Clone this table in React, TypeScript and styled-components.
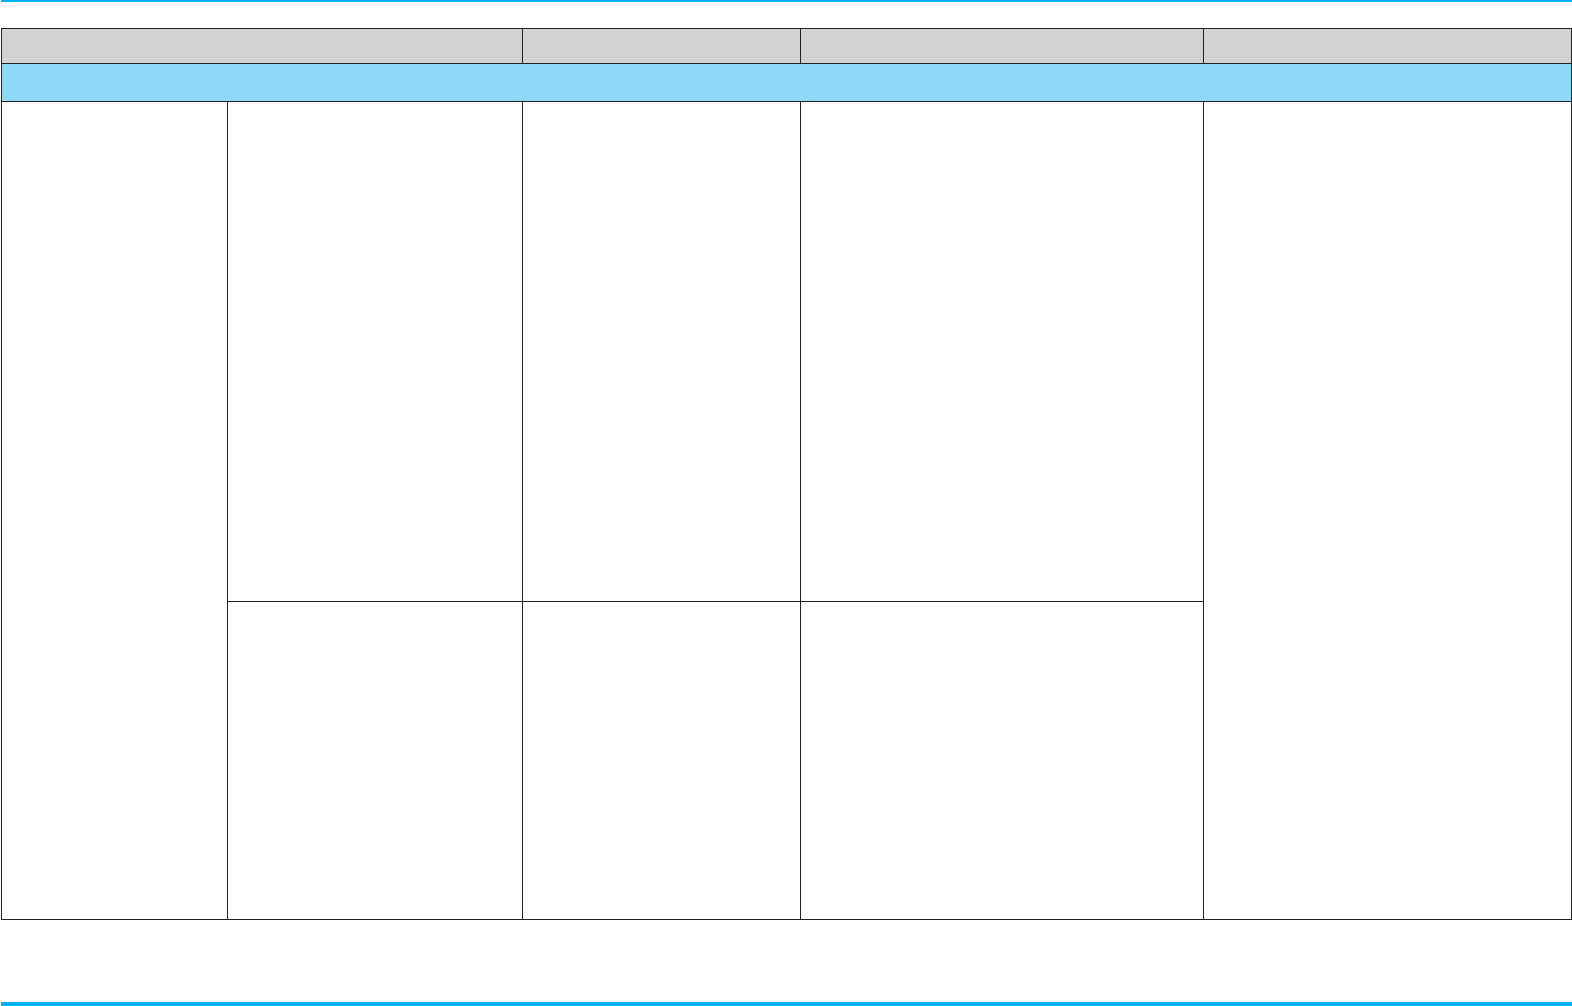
import * as React from 'react';
import styled, { createGlobalStyle } from 'styled-components';

const GlobalStyle = createGlobalStyle`
  html, body {
    margin: 0;
    padding: 0;
    background: #ffffff;
    font-family: 'Liberation Sans', Arial, sans-serif;
  }
`;

const Page = styled.div`
  display: flex;
  flex-direction: column;
  width: 1571px;
  height: 1006px;
  margin-left: 1px;
`;

const Rule = styled.div<{ $thick: number }>`
  height: ${(p) => p.$thick}px;
  background: #00b0f0;
  flex: none;
`;

const Spacer = styled.div<{ $h?: number }>`
  flex: ${(p) => (p.$h ? 'none' : '1')};
  height: ${(p) => (p.$h ? `${p.$h}px` : 'auto')};
`;

const Grid = styled.div`
  display: grid;
  grid-template-columns: 225px 294px 277px 402px 367px;
  grid-template-rows: 34px 37px 499px 317px;
  gap: 1px;
  padding: 1px;
  background: #222222;
`;

const Cell = styled.div<{ $col: string; $row: string; $bg?: string }>`
  grid-column: ${(p) => p.$col};
  grid-row: ${(p) => p.$row};
  background: ${(p) => p.$bg ?? '#ffffff'};
`;

const HEAD = '#d2d2d2';
const BAND = '#8fd9f8';

const App: React.FC = () => (
  <>
    <GlobalStyle />
    <Page>
      <Rule $thick={2} />
      <Spacer $h={26} />
      <Grid>
        {/* header */}
        <Cell $col="1 / 3" $row="1" $bg={HEAD} />
        <Cell $col="3" $row="1" $bg={HEAD} />
        <Cell $col="4" $row="1" $bg={HEAD} />
        <Cell $col="5" $row="1" $bg={HEAD} />
        {/* section band */}
        <Cell $col="1 / 6" $row="2" $bg={BAND} />
        {/* body */}
        <Cell $col="1" $row="3 / 5" />
        <Cell $col="2" $row="3" />
        <Cell $col="3" $row="3" />
        <Cell $col="4" $row="3" />
        <Cell $col="5" $row="3 / 5" />
        <Cell $col="2" $row="4" />
        <Cell $col="3" $row="4" />
        <Cell $col="4" $row="4" />
      </Grid>
      <Spacer />
      <Rule $thick={4} />
    </Page>
  </>
);

export default App;
